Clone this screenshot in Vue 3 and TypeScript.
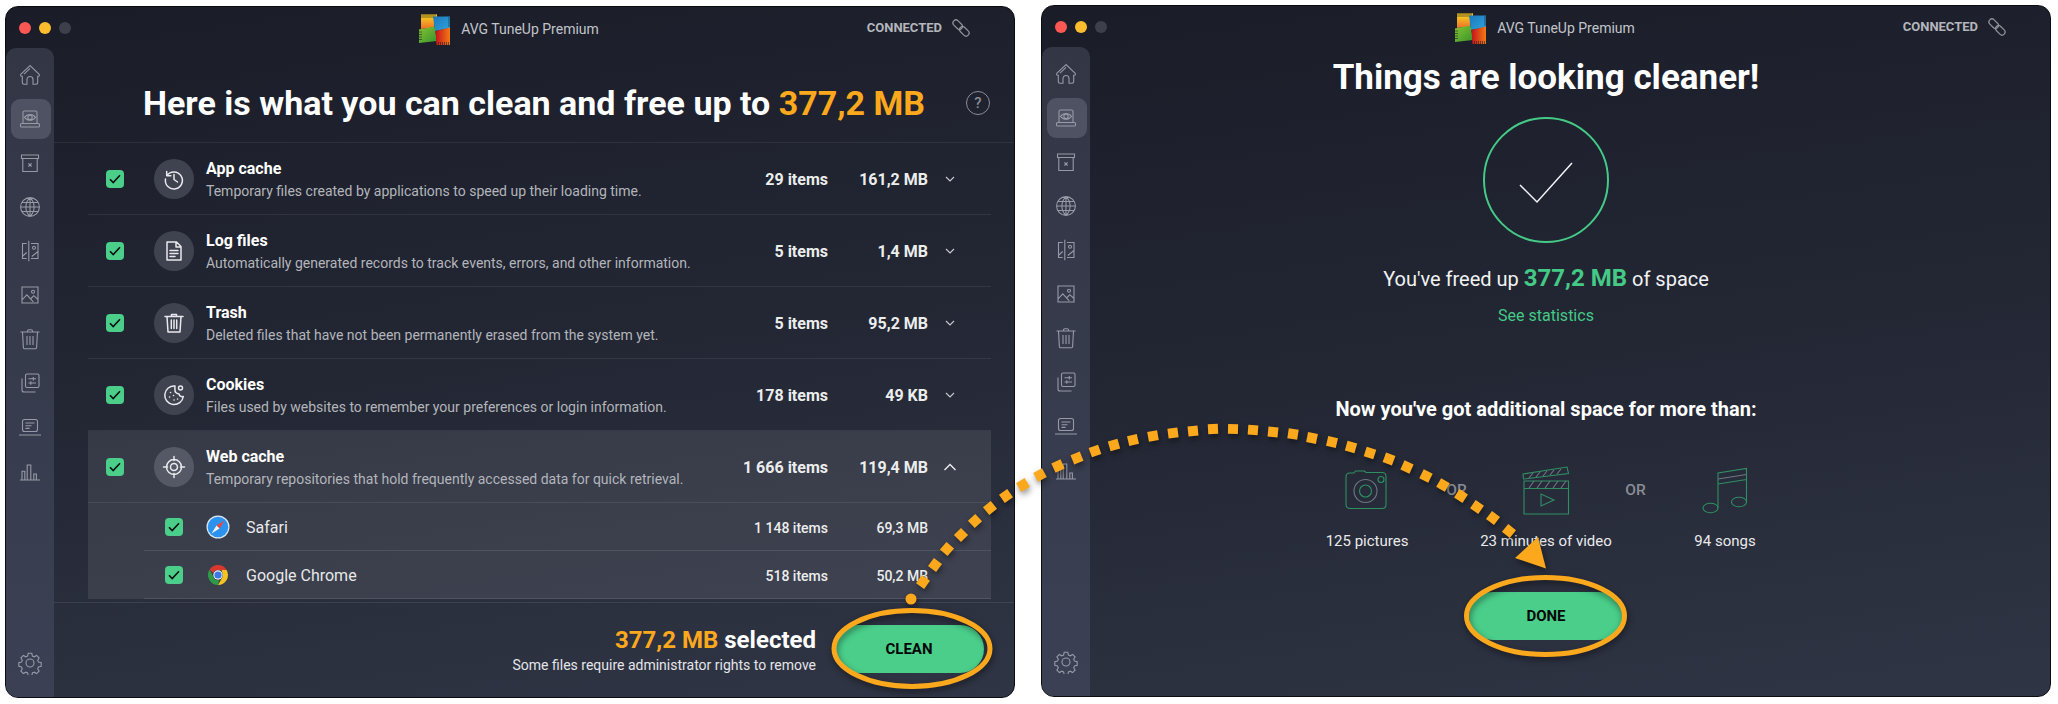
<script setup lang="ts">
const c = (x: number, y: number, r: number) =>
  `M${x - r} ${y}a${r} ${r} 0 1 0 ${2 * r} 0a${r} ${r} 0 1 0 ${-2 * r} 0`

const navIcons: string[] = [
  'M12 2.6 3 11.2c-.9 1-.3 2 .5 2H4.3v6.3c0 1 .8 1.7 1.7 1.7h3v-4.7c0-1.7 1.3-3 3-3s3 1.3 3 3v4.7h3c.9 0 1.7-.7 1.700-1.700v-6.300h.8c.8 0 1.400-1 .5-2zM12 5.400 6 11.200',
  'M5 16V5.500C5 4.700 5.700 4 6.500 4h11c.8 0 1.500.7 1.500 1.500V16M3.600 16.500h16.800c.6 0 1.100.5 1.100 1.100v1.300c0 .6-.5 1.100-1.100 1.100H3.600c-.6 0-1.100-.5-1.100-1.100v-1.300c0-.6.500-1.100 1.100-1.100zM6.500 10.300c2.800-3.800 8.200-3.800 11 0-2.800 3.800-8.200 3.800-11 0z' + c(12, 10.3, 2.2),
  'M3.500 4h17v3.500h-17zM4.800 7.500V20.500h14.400V7.500M10.400 12.300l3.200 3.200m0-3.200-3.200 3.200',
  c(12, 12, 9.4) + 'M12 2.600v18.800M2.600 12h18.800M3.800 7.500h16.400M3.800 16.500h16.400M12 2.600c-5.500 5-5.500 13.800 0 18.800M12 2.600c5.500 5 5.500 13.800 0 18.800',
  'M10.800 1.800v20.400M8.700 4.500H4.500v12.800M8.700 19.500H4.500v-2.200L8.700 13.500M13 4.500h7v15h-7M13.800 17.500 20 12.500' + c(16, 8.800, 1.500),
  'M4 4h16v16H4zM4 17l4.800-5.200 6.500 7M13 15.500l2.800-2.800 4.200 3.800' + c(15, 8.800, 1.500),
  'M2.500 5h19M9.500 5V4c0-.8.700-1.300 1.300-1.300h2.400c.6 0 1.300.5 1.300 1.300v1M4.500 5l.9 15.800c0 .5.500.9 1 .9h11.200c.5 0 1-.4 1-.9L19.500 5M9 9v9M12 9v9M15 9v9',
  'M9 3h10.500c.8 0 1.500.7 1.500 1.500v10.500c0 .8-.7 1.500-1.500 1.500H9c-.8 0-1.500-.7-1.500-1.500V4.500C7.500 3.700 8.200 3 9 3zM4 7.500V19c0 1.100.9 2 2 2h11.500M10.500 7.700h7.500M10.500 12h7.500M15.300 6v3.400M12.800 10.300v3.400',
  'M6.500 4.500h11c1.100 0 2 .9 2 2v8c0 1.100-.9 2-2 2h-11c-1.100 0-2-.9-2-2v-8c0-1.100.9-2 2-2zM7.500 8h9M7.500 10.800h6M7.500 13.400h4M1 20h22',
  'M2 21h20M4 20.500V12.300h2.800v8.200M9.200 20.500V6h3.600v14.500M15.800 20.500v-5.500h2.600v5.500',
]
const gear =
  'M10.200 2.300h3.600l.6 2.700 1.800.8 2.400-1.400 2.500 2.500-1.400 2.400.8 1.800 2.700.6v3.600l-2.700.6-.8 1.800 1.400 2.400-2.500 2.500-2.400-1.400-1.800.8-.6 2.700h-3.600l-.6-2.700-1.800-.8-2.400 1.400-2.500-2.500 1.400-2.400-.8-1.800-2.700-.6v-3.600l2.700-.6.800-1.800-1.400-2.400 2.500-2.500 2.400 1.400 1.800-.8z' +
  c(12, 12, 4)

interface Row {
  title: string
  desc: string
  items: string
  size: string
  icon: string
  open?: boolean
}
const rows: Row[] = [
  { title: 'App cache', desc: 'Temporary files created by applications to speed up their loading time.', items: '29 items', size: '161,2 MB',
    icon: 'M5 8.500A8.500 8.500 0 1 1 3.500 12M4.700 4.500v4.200h4.200M12 7.500v5l3.500 2.500' },
  { title: 'Log files', desc: 'Automatically generated records to track events, errors, and other information.', items: '5 items', size: '1,4 MB',
    icon: 'M5 3h9.500L19 7.500V21H5zM14 3v5h5M8 11.500h8M8 14.500h8M8 17.500h5' },
  { title: 'Trash', desc: 'Deleted files that have not been permanently erased from the system yet.', items: '5 items', size: '95,2 MB',
    icon: 'M3 5.500h18M9.500 5.500V3.500h5v2M5 5.500l1 15.500h12l1-15.500M9.300 9v8.500M12 9v8.500M14.700 9v8.500' },
  { title: 'Cookies', desc: 'Files used by websites to remember your preferences or login information.', items: '178 items', size: '49 KB',
    icon: 'M13 3a9.300 9.300 0 1 0 8.300 10.500c-2.400.5-4-.5-4.500-2.800-2.400.2-4.200-1.700-3.800-4.200-.3-1.200-.2-2.300 0-3.500zM8.500 9.500h.1M7.500 14h.1M11.500 12.500h.1M12 17h.1M15.500 16h.1' + c(18.500, 5, 2) },
  { title: 'Web cache', desc: 'Temporary repositories that hold frequently accessed data for quick retrieval.', items: '1 666 items', size: '119,4 MB', open: true,
    icon: c(12, 12, 7.500) + c(12, 12, 3.500) + 'M12 1.500v4M12 18.500v4M1.500 12h4M18.500 12h4' },
]

const dots: [number, number][] = [
  [923, 582], [935, 565], [947, 549], [961, 535], [975, 521], [990, 508], [1006, 496],
  [1023, 485], [1040, 475], [1058, 466], [1077, 458], [1095, 451], [1114, 445], [1133, 440],
  [1153, 436], [1173, 433], [1193, 431], [1213, 429], [1233, 429], [1253, 430], [1273, 432],
  [1293, 434], [1312, 438], [1332, 442], [1351, 447], [1370, 453], [1389, 459], [1407, 467],
  [1426, 476], [1443, 485], [1461, 496], [1477, 507], [1493, 518], [1509, 531],
]
const dotMarks = dots.map((p, i) => {
  const a = dots[Math.max(i - 1, 0)]
  const b = dots[Math.min(i + 1, dots.length - 1)]
  const deg = (Math.atan2(b[1] - a[1], b[0] - a[0]) * 180) / Math.PI
  return { x: p[0], y: p[1], deg }
})

const windows = ['clean', 'done']
</script>

<template>
  <div class="page">
    <section v-for="win in windows" :key="win" class="window" :class="win">
      <header class="titlebar">
        <div class="lights"><i class="red"></i><i class="yellow"></i><i class="off"></i></div>
        <div class="brand">
          <svg class="logo" width="32" height="32" viewBox="0 0 32 32">
            <defs>
              <linearGradient id="lgO" x1="0" y1="0" x2="0" y2="1"><stop offset="0" stop-color="#f7c81e" /><stop offset="1" stop-color="#ee6e2c" /></linearGradient>
              <linearGradient id="lgB" x1="0" y1="0" x2="1" y2="1"><stop offset="0" stop-color="#1d78bc" /><stop offset="1" stop-color="#2ea4dc" /></linearGradient>
              <linearGradient id="lgG" x1="0" y1="0" x2="1" y2="1"><stop offset="0" stop-color="#86c232" /><stop offset="1" stop-color="#36942c" /></linearGradient>
              <linearGradient id="lgR" x1="0" y1="0" x2="1" y2="0"><stop offset="0" stop-color="#c4121c" /><stop offset="1" stop-color="#f47a14" /></linearGradient>
            </defs>
            <path d="M2 1.200h16V6h-16z" fill="#f4c51d" />
            <path d="M2 4h14l-1 10.500-13 1.500z" fill="url(#lgO)" />
            <path d="M2 0v5M4 0v5M6 0v5M8 0v5M10 0v5M12 0v5M14 0v5M16 0v5" stroke="#1b1f2a" stroke-width=".6" />
            <path d="M14 3.500h17v11.500l-15 3z" fill="url(#lgB)" />
            <path d="M29 5h3M29 7h3M29 9h3M29 11h3M29 13h3" stroke="#1b1f2a" stroke-width=".6" />
            <path d="M0 16.500 15.500 13.500 18 28 0 30z" fill="url(#lgG)" />
            <path d="M0 19h3M0 21.500h3M0 24h3M0 26.500h3" stroke="#1b1f2a" stroke-width=".6" />
            <path d="M16.500 18 31 14.500V32H17.500z" fill="url(#lgR)" />
            <path d="M19.500 29v3M21.500 29v3M23.500 29v3M25.500 29v3M27.500 29v3M29.500 29v3" stroke="#1b1f2a" stroke-width=".6" />
          </svg>
          <span>AVG TuneUp Premium</span>
        </div>
        <div class="status">
          <span>CONNECTED</span>
          <svg width="18" height="18" viewBox="0 0 24 24" fill="none" stroke="currentColor" stroke-width="1.700">
            <g transform="rotate(45 12 12)">
              <rect x="-1.500" y="8" width="14.500" height="8" rx="4" />
              <rect x="11" y="8" width="14.500" height="8" rx="4" />
            </g>
          </svg>
        </div>
      </header>

      <div class="body">
        <nav class="sidebar">
          <a v-for="(d, i) in navIcons" :key="i" class="nav-item" :class="{ active: i === 1 }">
            <svg width="24" height="24" viewBox="0 0 24 24" fill="none" stroke="currentColor" stroke-width="1.100"><path :d="d" /></svg>
          </a>
          <a class="nav-item gear">
            <svg width="24" height="24" viewBox="0 0 24 24" fill="none" stroke="currentColor" stroke-width="1.100"><path :d="gear" /></svg>
          </a>
        </nav>

        <main v-if="win === 'clean'" class="main">
          <div class="heading">
            <span></span>
            <h1>Here is what you can clean and free up to <em>377,2 MB</em></h1>
            <span class="help">?</span>
          </div>
          <div class="list">
            <div v-for="r in rows" :key="r.title" class="row" :class="{ open: r.open }">
              <span class="check"><svg width="12" height="10" viewBox="0 0 12 10" fill="none" stroke="#0d0f12" stroke-width="1.600"><path d="M1 5.200 4.200 8.500 11 1.200" /></svg></span>
              <span class="circle">
                <svg width="24" height="24" viewBox="0 0 24 24" fill="none" stroke="currentColor" stroke-width="1.500" stroke-linecap="round" stroke-linejoin="round"><path :d="r.icon" /></svg>
              </span>
              <div class="text">
                <strong>{{ r.title }}</strong>
                <small>{{ r.desc }}</small>
              </div>
              <span class="items">{{ r.items }}</span>
              <span class="size">{{ r.size }}</span>
              <svg class="chev" width="12" height="8" viewBox="0 0 12 8" fill="none" stroke="currentColor" :stroke-width="r.open ? 1.400 : 1.100">
                <path v-if="r.open" d="M.5 7 6 1.500 11.500 7" />
                <path v-else d="M2 2l4 4 4-4" />
              </svg>
            </div>
            <div class="sub">
              <span class="check"><svg width="12" height="10" viewBox="0 0 12 10" fill="none" stroke="#0d0f12" stroke-width="1.600"><path d="M1 5.200 4.200 8.500 11 1.200" /></svg></span>
              <svg class="app" width="24" height="24" viewBox="0 0 24 24">
                <circle cx="12" cy="12" r="11.500" fill="#dfe8f2" />
                <circle cx="12" cy="12" r="10.300" fill="#2b93ee" />
                <path d="M18.500 5.500 10.500 10.500 13.500 13.500z" fill="#f0443c" />
                <path d="M5.500 18.500 13.500 13.500 10.500 10.500z" fill="#f3f4f6" />
              </svg>
              <span class="name">Safari</span>
              <span class="items">1 148 items</span>
              <span class="size">69,3 MB</span>
            </div>
            <div class="sub">
              <span class="check"><svg width="12" height="10" viewBox="0 0 12 10" fill="none" stroke="#0d0f12" stroke-width="1.600"><path d="M1 5.200 4.200 8.500 11 1.200" /></svg></span>
              <svg class="app" width="24" height="24" viewBox="0 0 24 24">
                <path d="M12 2a10 10 0 0 1 8.660 5H12a5 5 0 0 0-4.700 3.300L3.600 6.600A10 10 0 0 1 12 2z" fill="#d8382e" />
                <path d="M20.660 7A10 10 0 0 1 12 22l4.300-7.500A5 5 0 0 0 16.300 9.500L15.500 7z" fill="#f6c320" />
                <path d="M3.600 6.600 7.300 13.700A5 5 0 0 0 13 17l-1 5A10 10 0 0 1 3.600 6.600z" fill="#2f9a46" />
                <circle cx="12" cy="12" r="4.700" fill="#eef2f8" />
                <circle cx="12" cy="12" r="3.600" fill="#3b78e0" />
              </svg>
              <span class="name">Google Chrome</span>
              <span class="items">518 items</span>
              <span class="size">50,2 MB</span>
            </div>
          </div>
          <footer class="footer">
            <div class="summary">
              <p class="selected"><em>377,2 MB</em> selected</p>
              <p class="note">Some files require administrator rights to remove</p>
            </div>
            <button class="cta clean-btn">CLEAN</button>
          </footer>
        </main>

        <main v-else class="main result">
          <h1>Things are looking cleaner!</h1>
          <svg class="done-ring" width="128" height="128" viewBox="0 0 128 128" fill="none">
            <circle cx="64" cy="64" r="62" stroke="#45c986" stroke-width="2" />
            <path d="M38 69 55 86 90 47" stroke="#f3f4f6" stroke-width="1.500" />
          </svg>
          <p class="freed">You've freed up <b>377,2 MB</b> of space</p>
          <a class="stats">See statistics</a>
          <h2>Now you've got additional space for more than:</h2>
          <div class="trio">
            <div class="unit">
              <svg width="50" height="50" viewBox="0 0 50 50" fill="none" stroke="#2f8f63" stroke-width="1.100">
                <path d="M8 8h4l1.500-2h9L24 7.500h16c2.500 0 4 1.500 4 4v28c0 2.500-1.500 4-4 4H8c-2.500 0-4-1.500-4-4V12c0-2.500 1.500-4 4-4z" />
                <circle cx="23.500" cy="26" r="11.500" stroke="#6f7683" />
                <circle cx="23.500" cy="26" r="6" />
                <circle cx="39" cy="14.500" r="3" />
              </svg>
              <span>125 pictures</span>
            </div>
            <span class="or">OR</span>
            <div class="unit">
              <svg width="50" height="50" viewBox="0 0 50 50" fill="none" stroke="#2f8f63" stroke-width="1.100">
                <path d="M2 9 46 2l1.500 6.500L2.500 14zM3 16h44.500v7.500H3zM3 23.500h44.500V49H3z" />
                <path d="M8 13 12 8M15 12l4-5M22 11l4-5M29 10l4-5M36 9l4-5M8 23l5-7M16 23l5-7M24 23l5-7M32 23l5-7M40 23l5-7" stroke="#6f7683" />
                <path d="M20 29v12l13-6z" />
              </svg>
              <span>23 minutes of video</span>
            </div>
            <span class="or">OR</span>
            <div class="unit">
              <svg width="50" height="50" viewBox="0 0 50 50" fill="none" stroke="#2f8f63" stroke-width="1.100">
                <ellipse cx="10.500" cy="43" rx="7.500" ry="4.800" />
                <ellipse cx="39" cy="37" rx="7.500" ry="4.800" />
                <path d="M18 43V8L46.500 3.500V37M18 19 46.500 14.500" />
                <path d="M18 14 46.500 9.500" stroke="#6f7683" />
              </svg>
              <span>94 songs</span>
            </div>
          </div>
          <button class="cta done-btn">DONE</button>
        </main>
      </div>
    </section>

    <svg class="overlay" width="2058" height="704" viewBox="0 0 2058 704" fill="none">
      <g class="shadowed">
        <ellipse cx="912" cy="648.500" rx="78" ry="38" stroke="#fca81d" stroke-width="5" />
        <ellipse cx="1545.500" cy="616" rx="79" ry="38.500" stroke="#fca81d" stroke-width="5" />
        <circle cx="911" cy="599" r="5.500" fill="#fca81d" />
        <rect
          v-for="(m, i) in dotMarks"
          :key="i"
          x="-5"
          y="-5"
          width="10"
          height="10"
          fill="#fca81d"
          :transform="`translate(${m.x} ${m.y}) rotate(${m.deg})`"
        />
        <path d="M1546 568.500 1515 558 1538 537z" fill="#fca81d" />
      </g>
    </svg>
  </div>
</template>

<style scoped>
.page {
  position: relative;
  width: 2058px;
  height: 704px;
  overflow: hidden;
  display: flex;
  gap: 26px;
  padding: 5px 0 0 5px;
  box-sizing: border-box;
  background: #fff;
  font-family: Roboto, "Liberation Sans", sans-serif;
  color: #fff;
}
.window {
  width: 1010px;
  height: 692px;
  box-sizing: border-box;
  border: 1px solid #0b0c10;
  border-radius: 13px;
  overflow: hidden;
  display: flex;
  flex-direction: column;
  background: linear-gradient(172deg, #1a1d28 0%, #232734 50%, #303545 100%);
}
.window.clean {
  margin-top: 1px;
}
.titlebar {
  height: 41px;
  flex: none;
  display: grid;
  grid-template-columns: 1fr auto 1fr;
  align-items: center;
}
.lights {
  display: flex;
  gap: 8px;
  padding-left: 13px;
}
.lights i {
  width: 12px;
  height: 12px;
  border-radius: 50%;
}
.red { background: #fc5753; }
.yellow { background: #fdbc2e; }
.off { background: #3d404b; }
.brand {
  display: flex;
  align-items: center;
  gap: 10px;
  font-size: 14px;
  color: #c2c4ca;
  padding: 3px 2px 0 0;
}
.status {
  display: flex;
  align-items: center;
  justify-content: flex-end;
  gap: 10px;
  padding-right: 44px;
  font-size: 13px;
  font-weight: 700;
  color: #b4b6bc;
}
.status svg { color: #8d9099; }
.body {
  flex: 1;
  min-height: 0;
  display: flex;
}
.sidebar {
  width: 48px;
  flex: none;
  box-sizing: border-box;
  padding: 7px 3px 0 5px;
  display: flex;
  flex-direction: column;
  gap: 4px;
  border-radius: 10px 10px 0 0;
  background: linear-gradient(180deg, #323645 0%, #3b4054 100%);
  color: #979aa6;
}
.nav-item {
  width: 40px;
  height: 40px;
  flex: none;
  display: flex;
  align-items: center;
  justify-content: center;
  padding-right: 2px;
  box-sizing: border-box;
  border-radius: 9px;
}
.nav-item.active { background: #4e5262; }
.nav-item.gear { margin-top: auto; margin-bottom: 14px; }
.main {
  flex: 1;
  min-width: 0;
  display: flex;
  flex-direction: column;
}
.heading {
  height: 95px;
  flex: none;
  box-sizing: border-box;
  display: grid;
  grid-template-columns: 1fr auto 1fr;
  align-items: center;
  padding: 15px 24px 0;
  border-bottom: 1px solid rgba(255, 255, 255, .07);
}
h1 {
  margin: 0;
  font-size: 34px;
  line-height: 40px;
  font-weight: 700;
  white-space: nowrap;
}
.result h1 { font-size: 35px; }
h1 em, .selected em {
  font-style: normal;
  color: #fca81d;
}
.help {
  justify-self: end;
  width: 24px;
  height: 24px;
  box-sizing: border-box;
  border: 1.500px solid #8a8d96;
  border-radius: 50%;
  display: flex;
  align-items: center;
  justify-content: center;
  font-size: 15px;
  font-weight: 500;
  color: #8a8d96;
}
.list {
  height: 459px;
  flex: none;
  margin: 0 23px 0 34px;
  overflow: hidden;
}
.row {
  height: 72px;
  box-sizing: border-box;
  display: flex;
  align-items: center;
  padding: 0 35px 0 18px;
  border-bottom: 1px solid rgba(255, 255, 255, .08);
}
.row.open, .sub { background: rgba(255, 255, 255, .085); }
.check {
  width: 18px;
  height: 18px;
  flex: none;
  border-radius: 4px;
  background: #4ace8a;
  display: flex;
  align-items: center;
  justify-content: center;
}
.circle {
  width: 40px;
  height: 40px;
  flex: none;
  margin-left: 30px;
  border-radius: 50%;
  background: #3f4350;
  color: #e8e9ec;
  display: flex;
  align-items: center;
  justify-content: center;
}
.row.open .circle { background: #555965; }
.text {
  flex: 1;
  min-width: 0;
  margin-left: 12px;
  padding-top: 2px;
  display: flex;
  flex-direction: column;
  gap: 3px;
}
.text strong {
  font-size: 16px;
  line-height: 20px;
  font-weight: 700;
}
.text small {
  font-size: 14px;
  line-height: 18px;
  color: #b3b5bb;
  white-space: nowrap;
}
.items, .size {
  flex: none;
  text-align: right;
  font-size: 16px;
  font-weight: 700;
  white-space: nowrap;
  color: #eceded;
  padding-top: 1px;
}
.items { width: 120px; }
.size { width: 100px; }
.chev {
  flex: none;
  margin-left: 16px;
  color: #c8cacf;
}
.row.open .chev { color: #eee; }
.sub {
  height: 48px;
  box-sizing: border-box;
  display: flex;
  align-items: center;
  padding: 0 63px 0 77px;
  position: relative;
}
.sub::after {
  content: "";
  position: absolute;
  left: 56px;
  right: 0;
  bottom: 0;
  height: 1px;
  background: rgba(255, 255, 255, .1);
}
.app {
  flex: none;
  margin-left: 23px;
}
.name {
  flex: 1;
  margin-left: 16px;
  font-size: 16px;
  color: #e7e8ea;
}
.sub .items {
  width: auto;
  font-size: 14px;
  font-weight: 500;
}
.sub .size {
  font-size: 14px;
  font-weight: 500;
}
.footer {
  flex: 1;
  display: flex;
  justify-content: flex-end;
  align-items: flex-start;
  padding: 22px 30px 0 0;
  border-top: 1px solid rgba(255, 255, 255, .09);
}
.summary {
  text-align: right;
  margin: 0 18px 0 0;
}
.summary p { margin: 0; white-space: nowrap; }
.selected {
  font-size: 24px;
  line-height: 30px;
  font-weight: 700;
}
.summary .note {
  font-size: 14px;
  line-height: 18px;
  margin-top: 1px;
  color: #e4e5e8;
}
.cta {
  display: block;
  border: 0;
  background: #4ace8a;
  color: #050607;
  font-family: inherit;
  font-weight: 700;
  font-size: 15px;
  border-radius: 25px;
  padding: 0;
}
.clean-btn { width: 150px; height: 48px; }
.done-btn { width: 154px; height: 48px; margin-top: 41px; }
.result {
  align-items: center;
  padding-right: 48px;
  padding-top: 11px;
}
.done-ring { margin-top: 18px; }
.freed {
  margin: 21px 0 0;
  font-size: 20px;
  line-height: 26px;
  color: #f1f2f3;
}
.freed b {
  font-size: 24px;
  font-weight: 700;
  color: #45c986;
}
.stats {
  margin-top: 14px;
  font-size: 16px;
  line-height: 20px;
  font-weight: 400;
  color: #45c986;
}
h2 {
  margin: 71px 0 0;
  font-size: 20px;
  line-height: 24px;
  font-weight: 700;
  white-space: nowrap;
}
.trio {
  display: grid;
  grid-template-columns: 140px 39px 140px 39px 140px;
  margin-top: 44px;
}
.unit {
  display: flex;
  flex-direction: column;
  align-items: center;
  gap: 16px;
  font-size: 15px;
  line-height: 20px;
  color: #e9eaec;
  white-space: nowrap;
}
.or {
  height: 50px;
  display: flex;
  align-items: center;
  justify-content: center;
  font-size: 15.500px;
  font-weight: 500;
  color: #8a8d96;
}
.overlay {
  position: absolute;
  top: 0;
  left: 0;
  pointer-events: none;
}
.shadowed {
  filter: drop-shadow(1px 3px 3px rgba(0, 0, 0, .45));
}
</style>

<style>
html, body { margin: 0; background: #fff; }
</style>
